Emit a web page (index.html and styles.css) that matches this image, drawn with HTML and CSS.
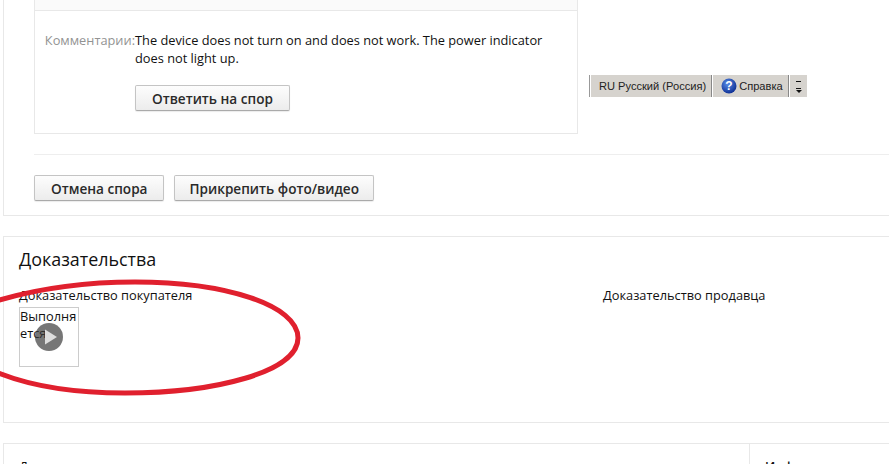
FILE: index.html
```html
<!DOCTYPE html>
<html lang="ru">
<head>
<meta charset="utf-8">
<title>Доказательства</title>
<link rel="stylesheet" href="styles.css">
</head>
<body>
<div class="page">
  <section class="panel panel-dispute">
    <div class="dispute-inner">
      <div class="box">
        <div class="box-top"></div>
        <div class="box-body">
          <div class="label">Комментарии:</div>
          <div class="content">
            <p class="comment">The device does not turn on and does not work. The power indicator does not light up.</p>
            <button class="btn">Ответить на спор</button>
          </div>
        </div>
      </div>
      <div class="actions">
        <button class="btn">Отмена спора</button>
        <button class="btn btn-attach">Прикрепить фото/видео</button>
      </div>
    </div>
  </section>

  <section class="panel panel-evidence">
    <h2 class="title">Доказательства</h2>
    <div class="evidence-cols">
      <div class="col-buyer">
        <div class="col-title">Доказательство покупателя</div>
        <div class="thumb">
          Выполняется
          <svg class="play" viewBox="0 0 28 28" width="28" height="28"><circle cx="14" cy="14" r="14" class="play-disc"/><path d="M10 6.5 L22 14 L10 21.5 Z" class="play-arrow"/></svg>
        </div>
      </div>
      <div class="col-seller">
        <div class="col-title">Доказательство продавца</div>
      </div>
    </div>
  </section>

  <section class="panel panel-info">
    <div class="info-main">Детали</div>
    <div class="info-side">Инф</div>
  </section>

  <div class="langbar">
    <span class="lang">RU Русский (Россия)</span>
    <span class="help">
      <svg viewBox="0 0 16 16" width="16" height="16"><defs><radialGradient id="hg" cx="40%" cy="35%" r="70%"><stop offset="0" stop-color="#5a8ee8"/><stop offset="1" stop-color="#0a2a90"/></radialGradient></defs><circle cx="8" cy="8" r="7.5" fill="url(#hg)"/><text x="8" y="12" text-anchor="middle" class="help-q">?</text></svg>
      Справка
    </span>
    <span class="opts"><i class="dash"></i><i class="dash2"></i><i class="arrow"></i></span>
  </div>

  <svg class="ellipse" width="889" height="464" viewBox="0 0 889 464">
    <path d="M-4 301 C40 288 90 282 135 282 C225 282 298 305 298 338 C298 372 215 393 125 393 C75 393 30 386 -4 372" fill="none" stroke="#e0202e" stroke-width="5"/>
  </svg>
</div>
</body>
</html>
```

FILE: styles.css
```css
html, body {
  margin: 0;
  padding: 0;
  background: #fff;
}
.page {
  position: relative;
  width: 889px;
  height: 464px;
  overflow: hidden;
  font-family: "Open Sans", sans-serif;
  font-size: 12.8px;
  color: #111;
}
.panel {
  margin-left: 3px;
  border: 1px solid #e8e8e8;
  border-right: 0;
  box-sizing: border-box;
}
.panel-dispute {
  height: 216px;
  border-top: 0;
  margin-bottom: 20px;
}
.dispute-inner {
  margin-left: 30px;
}
.box {
  width: 544px;
  height: 134px;
  box-sizing: border-box;
  border: 1px solid #e8e8e8;
  border-top: 0;
}
.box-top {
  height: 10px;
  background: #fafafa;
  border-bottom: 1px solid #e8e8e8;
}
.box-body {
  display: flex;
  padding-top: 20px;
}
.label {
  width: 100px;
  flex: none;
  text-align: right;
  color: #939393;
  line-height: 18px;
  white-space: nowrap;
}
.content {
  width: 420px;
}
.comment {
  margin: 0 0 18px;
  line-height: 18px;
}
.btn {
  height: 26px;
  padding: 0 16px;
  box-sizing: border-box;
  border: 1px solid #c4c4c4;
  border-bottom-color: #aaa;
  border-radius: 2px;
  background: linear-gradient(#fdfdfd, #ececec);
  font-family: "Open Sans", sans-serif;
  font-size: 13.6px;
  font-weight: 600;
  color: #2a2a2a;
  box-shadow: 0 1px 1px rgba(0,0,0,.08);
}
.btn-attach {
  padding: 0 14px;
}
.actions {
  display: flex;
  gap: 10px;
  margin-top: 20px;
  padding-top: 20px;
  border-top: 1px solid #eee;
}
.panel-evidence {
  height: 187px;
  padding: 10px 15px 0;
  margin-bottom: 20px;
}
.title {
  margin: 0 0 15px;
  font-size: 17.9px;
  font-weight: 400;
  line-height: 24px;
  color: #111;
}
.evidence-cols {
  display: flex;
}
.col-buyer {
  width: 584px;
  flex: none;
}
.col-title {
  line-height: 18px;
}
.thumb {
  position: relative;
  width: 60px;
  height: 60px;
  margin-top: 3px;
  box-sizing: border-box;
  border: 1px solid #ccc;
  padding: 0;
  line-height: 17px;
  word-break: break-all;
}
.play {
  position: absolute;
  left: 15px;
  top: 15px;
}
.play-disc {
  fill: rgba(60, 60, 60, .7);
}
.play-arrow {
  fill: #ddd;
}
.panel-info {
  display: flex;
  height: 40px;
  font-size: 13px;
}
.info-main {
  width: 746px;
  flex: none;
  padding: 13px 0 0 15px;
  box-sizing: border-box;
  border-right: 1px solid #e8e8e8;
}
.info-side {
  padding: 13px 0 0 15px;
  font-weight: 600;
}
.langbar {
  position: absolute;
  left: 589px;
  top: 75px;
  width: 218px;
  height: 22px;
  display: flex;
  align-items: center;
  background: #d6d3ce;
  box-sizing: border-box;
  border-left: 1px solid #999;
  font-family: "Liberation Sans", sans-serif;
  font-size: 11.1px;
  color: #222;
}
.lang {
  padding: 0 5px 0 8px;
  height: 100%;
  display: flex;
  align-items: center;
  white-space: nowrap;
  border-left: 1px solid #fff;
  border-right: 1px solid #888;
}
.help {
  display: flex;
  align-items: center;
  gap: 2px;
  height: 100%;
  padding: 0 5px 0 8px;
  white-space: nowrap;
  border-left: 1px solid #fff;
  border-right: 1px solid #888;
}
.help-q {
  font-family: "Liberation Sans", sans-serif;
  font-size: 12px;
  font-weight: 700;
  fill: #fff;
}
.opts {
  position: relative;
  flex: 1;
  height: 100%;
  border-left: 1px solid #fff;
}
.dash, .dash2 {
  position: absolute;
  left: 6px;
  width: 5px;
  height: 1px;
  background: #111;
}
.dash { top: 6px; }
.dash2 { top: 13px; }
.arrow {
  position: absolute;
  left: 6px;
  top: 15px;
  border-left: 3px solid transparent;
  border-right: 3px solid transparent;
  border-top: 3px solid #111;
}
.ellipse {
  position: absolute;
  left: 0;
  top: 0;
  pointer-events: none;
}
```
